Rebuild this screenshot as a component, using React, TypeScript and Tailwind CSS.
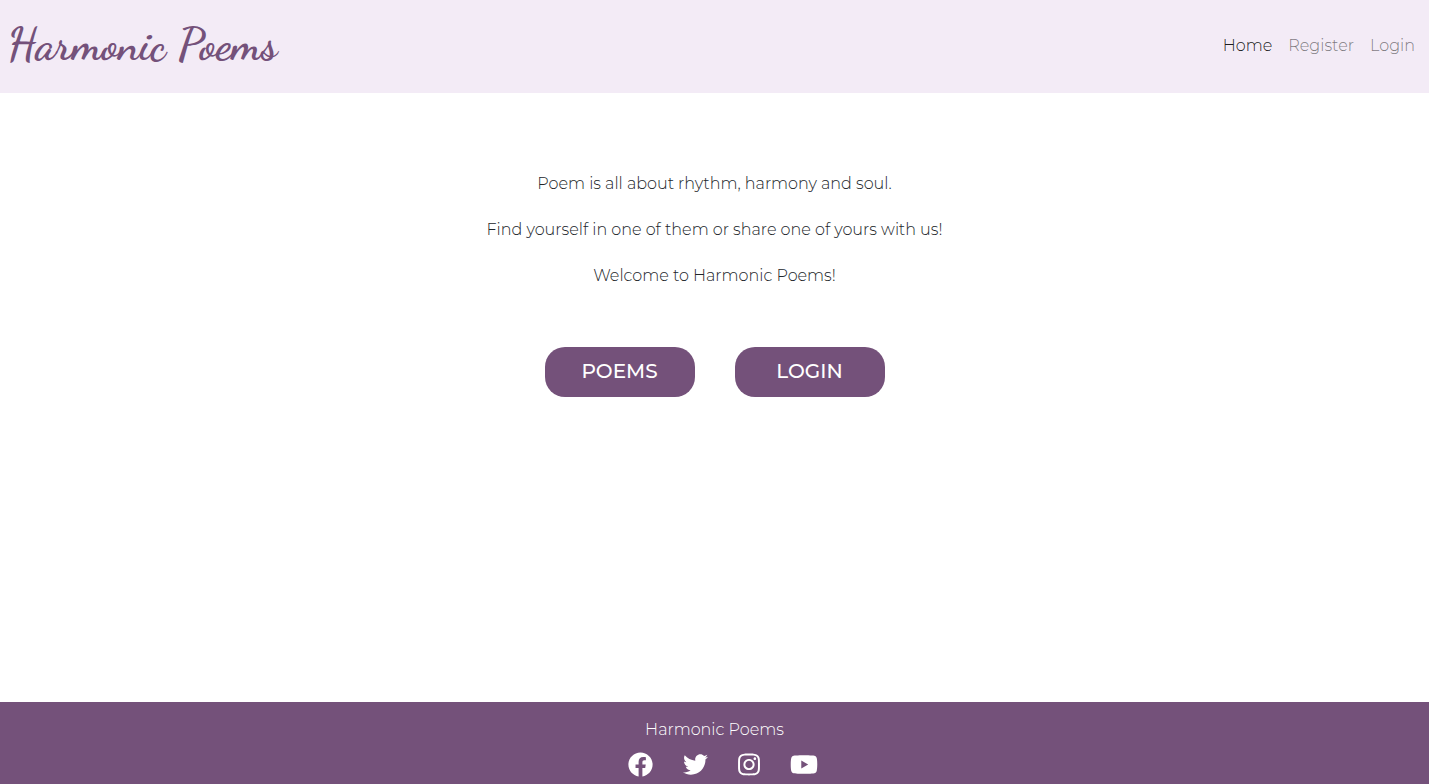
import { FaFacebook, FaInstagram, FaTwitter, FaYoutube } from "react-icons/fa";

const navLinks = [
  { label: "Home", href: "#home", color: "text-black/90" },
  { label: "Register", href: "#register", color: "text-black/50" },
  { label: "Login", href: "#login", color: "text-black/50" },
];

const socialLinks = [
  { label: "Facebook", href: "#facebook", icon: FaFacebook, size: "h-[25px] w-[25px]" },
  { label: "Twitter", href: "#twitter", icon: FaTwitter, size: "h-[25px] w-[25px]" },
  { label: "Instagram", href: "#instagram", icon: FaInstagram, size: "h-[25px] w-[22px]" },
  { label: "YouTube", href: "#youtube", icon: FaYoutube, size: "h-[25px] w-7" },
];

const lines = [
  "Poem is all about rhythm, harmony and soul.",
  "Find yourself in one of them or share one of yours with us!",
  "Welcome to Harmonic Poems!",
];

function Header() {
  return (
    <header className="flex h-[93px] items-center justify-between bg-[#f3ebf6] pr-3.5 pb-0.5 pl-[7px]">
      <a
        href="#home"
        className="font-['Dancing_Script','Liberation_Serif',cursive] text-[45px] leading-none font-bold text-[#74517a]"
      >
        Harmonic Poems
      </a>
      <nav className="flex gap-4 text-base leading-6">
        {navLinks.map(({ label, href, color }) => (
          <a key={label} href={href} className={color}>
            {label}
          </a>
        ))}
      </nav>
    </header>
  );
}

function Footer() {
  return (
    <footer className="flex h-[82px] flex-col items-center bg-[#74517a] pt-4 text-white">
      <p className="text-base leading-6">Harmonic Poems</p>
      <div className="mt-2.5 flex gap-[30px] pl-4">
        {socialLinks.map(({ label, href, icon: Icon, size }) => (
          <a key={label} href={href} aria-label={label}>
            <Icon className={size} />
          </a>
        ))}
      </div>
    </footer>
  );
}

export default function App() {
  return (
    <div className="flex min-h-screen flex-col bg-white font-['Montserrat','Inter',sans-serif] font-light text-[#212529]">
      <Header />
      <main className="flex grow flex-col items-center px-4 pt-[79px]">
        <div className="flex flex-col gap-[22px] text-center text-base leading-6">
          {lines.map((line) => (
            <p key={line}>{line}</p>
          ))}
        </div>
        <div className="mt-[59px] flex gap-10 text-xl font-medium text-white">
          <button type="button" className="h-[50px] w-[150px] rounded-[20px] bg-[#74517a] pb-0.5">
            POEMS
          </button>
          <button type="button" className="h-[50px] w-[150px] rounded-[20px] bg-[#74517a] pb-0.5">
            LOGIN
          </button>
        </div>
      </main>
      <Footer />
    </div>
  );
}
